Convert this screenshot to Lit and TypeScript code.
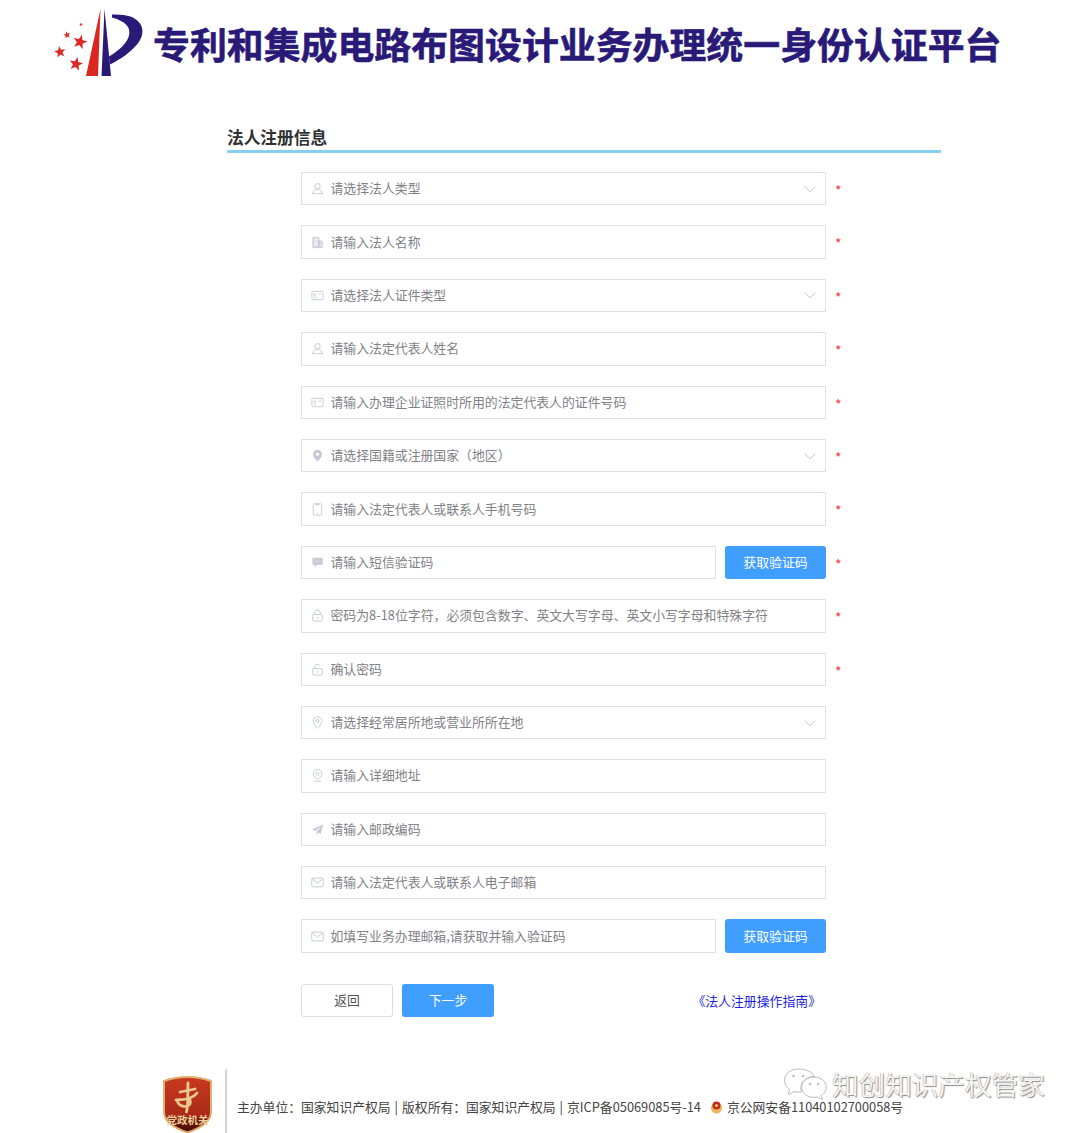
import { LitElement, html, css, svg } from "lit";
import { customElement } from "lit/decorators.js";

const G = "#c5c9d3";
const icons: Record<string, any> = {
  user: svg`<circle cx="7" cy="4.6" r="3" fill="none" stroke="${G}"/><path d="M1.6 12.5c.4-3 2.6-4.4 5.4-4.4s5 1.4 5.4 4.4z" fill="none" stroke="${G}"/>`,
  org: svg`<path d="M2 1.5h6.5v11H2zM8.500 5.500h3.500v7H8.500z" fill="${G}" fill-opacity=".55" stroke="${G}"/><path d="M3.800 4h3M3.800 6.500h3M3.800 9h3" stroke="#fff"/>`,
  card: svg`<rect x="1" y="2.500" width="12" height="9" rx="1" fill="none" stroke="${G}"/><path d="M3 8.800h3M8 5.500h3" stroke="${G}"/><rect x="3" y="5" width="2" height="2" fill="${G}"/>`,
  pinSolid: svg`<path d="M7 .8a4.800 4.800 0 0 0-4.800 4.800C2.200 9 7 13.400 7 13.400s4.800-4.400 4.800-7.800A4.800 4.800 0 0 0 7 .8z" fill="${G}"/><circle cx="7" cy="5.600" r="1.800" fill="#fff"/>`,
  phone: svg`<rect x="2.500" y=".8" width="9" height="12.400" rx="1.400" fill="none" stroke="${G}"/><path d="M5 1h4v1.400H5z" fill="${G}"/><path d="M6.200 11h1.600" stroke="${G}"/>`,
  chat: svg`<path d="M1.500 2h11v7.500H6.500L4 12V9.500H1.500z" fill="${G}"/><path d="M4 5.700h1M6.500 5.700h1M9 5.700h1" stroke="#fff"/>`,
  lock: svg`<rect x="1.800" y="6" width="10.400" height="7" rx="1" fill="none" stroke="${G}"/><path d="M4 6V4a3 3 0 0 1 6 0v2" fill="none" stroke="${G}"/><path d="M7 8.500v2" stroke="${G}"/>`,
  unlock: svg`<rect x="1.800" y="6" width="10.400" height="7" rx="1" fill="none" stroke="${G}"/><path d="M4 6V4a3 3 0 0 1 5.800-.8" fill="none" stroke="${G}"/><path d="M7 8.500v2" stroke="${G}"/>`,
  pin: svg`<path d="M7 .8a4.600 4.600 0 0 0-4.600 4.600C2.400 8.800 7 13.400 7 13.400s4.600-4.600 4.600-8A4.600 4.600 0 0 0 7 .8z" fill="none" stroke="${G}"/><circle cx="7" cy="5.400" r="1.700" fill="none" stroke="${G}"/>`,
  pinBase: svg`<path d="M7 .6a4.600 4.600 0 0 0-4.600 4.600C2.400 8 7 11.600 7 11.600s4.600-3.600 4.600-6.400A4.600 4.600 0 0 0 7 .6z" fill="none" stroke="${G}"/><circle cx="7" cy="5.200" r="1.700" fill="none" stroke="${G}"/><path d="M3.500 13.200h7" stroke="${G}"/>`,
  send: svg`<path d="M13 1.500 1 7l3.400 1.600L11 4 6 9.400V13l2.200-2.600 2.400 1.100z" fill="${G}"/>`,
  mail: svg`<rect x=".8" y="2.300" width="12.400" height="9.400" rx="1.200" fill="none" stroke="${G}"/><path d="M1.200 3.200 7 7.600l5.800-4.400" fill="none" stroke="${G}"/>`,
};

type Row = { icon: string; text: string; select?: boolean; req?: boolean; code?: boolean };
const rows: Row[] = [
  { icon: "user", text: "请选择法人类型", select: true, req: true },
  { icon: "org", text: "请输入法人名称", req: true },
  { icon: "card", text: "请选择法人证件类型", select: true, req: true },
  { icon: "user", text: "请输入法定代表人姓名", req: true },
  { icon: "card", text: "请输入办理企业证照时所用的法定代表人的证件号码", req: true },
  { icon: "pinSolid", text: "请选择国籍或注册国家（地区）", select: true, req: true },
  { icon: "phone", text: "请输入法定代表人或联系人手机号码", req: true },
  { icon: "chat", text: "请输入短信验证码", code: true, req: true },
  { icon: "lock", text: "密码为8-18位字符，必须包含数字、英文大写字母、英文小写字母和特殊字符", req: true },
  { icon: "unlock", text: "确认密码", req: true },
  { icon: "pin", text: "请选择经常居所地或营业所所在地", select: true },
  { icon: "pinBase", text: "请输入详细地址" },
  { icon: "send", text: "请输入邮政编码" },
  { icon: "mail", text: "请输入法定代表人或联系人电子邮箱" },
  { icon: "mail", text: "如填写业务办理邮箱,请获取并输入验证码", code: true },
];

const star = (cx: number, cy: number, r: number, rot = 0) => {
  const pts: string[] = [];
  for (let i = 0; i < 10; i++) {
    const a = ((-90 + rot + i * 36) * Math.PI) / 180;
    const d = i % 2 ? r * 0.42 : r;
    pts.push(`${(cx + d * Math.cos(a)).toFixed(2)},${(cy + d * Math.sin(a)).toFixed(2)}`);
  }
  return svg`<polygon points="${pts.join(" ")}" fill="#dc2b26"/>`;
};

@customElement("app-root")
export class AppRoot extends LitElement {
  static styles = css`
    :host {
      display: block;
      position: relative;
      width: 1080px;
      height: 1133px;
      overflow: hidden;
      background: #fff;
      font-family: "Noto Sans CJK SC", "Liberation Sans", sans-serif;
      color: #333;
    }
    .header {
      display: flex;
      align-items: center;
      height: 87px;
      padding-left: 50px;
    }
    .logo { width: 100px; height: 80px; flex: none; margin-right: 3px; }
    .brand {
      font-size: 36.9px;
      font-weight: 700;
      color: #2a1a78;
      white-space: nowrap;
      -webkit-text-stroke: 0.6px #2a1a78;
      line-height: 1;
    }
    .section {
      margin: 37px 0 0 227px;
      width: 714px;
      height: 29px;
      box-sizing: border-box;
      border-bottom: 3px solid #87cfee;
      font-size: 16.7px;
      font-weight: 700;
      line-height: 27px;
      color: #303133;
    }
    .form {
      margin: 19px 0 0 301px;
      display: grid;
      gap: 20px;
      grid-auto-rows: 33.4px;
      width: 560px;
    }
    .row { display: flex; align-items: stretch; }
    .field {
      box-sizing: border-box;
      flex: none;
      width: 525px;
      display: flex;
      align-items: center;
      padding-left: 9px;
      border: 1px solid #dfe1ea;
      background: #fff;
      font-size: 12.86px;
      color: #808287;
      white-space: nowrap;
    }
    .field.short { width: 415px; }
    .ico { width: 13px; height: 13px; flex: none; margin-right: 6.500px; }
    .label { flex: 1; padding-bottom: 2px; }
    .chev { width: 12px; height: 12px; flex: none; margin-right: 9px; }
    .btn {
      box-sizing: border-box;
      border-radius: 3px;
      display: flex;
      align-items: center;
      justify-content: center;
      font-size: 12.86px;
      padding-bottom: 2px;
    }
    .primary { background: #409eff; color: #fff; }
    .code { width: 101px; margin-left: 9px; flex: none; }
    .star {
      flex: none;
      width: 10px;
      margin-left: 9px;
      color: #f03a3a;
      font-size: 14px;
      line-height: 36px;
    }
    .actions {
      margin: 31.500px 0 0 301px;
      width: 525px;
      display: flex;
      align-items: center;
      height: 33px;
      gap: 9px;
    }
    .actions .btn { width: 92px; height: 33px; }
    .ghost { border: 1px solid #dcdfe6; color: #555; background: #fff; }
    .guide {
      margin-left: auto;
      margin-right: 5px;
      font-size: 12.86px;
      color: #1f1fe0;
      white-space: nowrap;
      padding-bottom: 1px;
    }
    .footer {
      margin: 52px 0 0 163px;
      display: flex;
      align-items: stretch;
      height: 64px;
      color: #444;
      white-space: nowrap;
    }
    .shield { width: 49px; height: 57px; flex: none; margin-top: 7px; }
    .divider { width: 2px; background: #d4d4d4; margin: 0 10px 0 13px; flex: none; }
    .info { display: flex; align-items: center; height: 75px; font-size: 12.8px; }
    .bar { margin: 0 4px; }
    .badge { width: 13px; height: 14px; margin: 0 4px 0 9px; flex: none; }
    .watermark {
      position: absolute;
      left: 783px;
      top: 1066px;
      display: flex;
      align-items: center;
      gap: 4px;
      pointer-events: none;
    }
    .wechat { width: 45px; height: 36px; flex: none; }
    .wm {
      font-size: 26.600px;
      line-height: 36px;
      color: #f4f4f4;
      white-space: nowrap;
      text-shadow: 1px 1px 1px #8c8c8c, -0.500px -0.500px 0 #b0b0b0;
    }
  `;

  private renderRow(r: Row) {
    return html`<div class="row">
      <div class="field ${r.code ? "short" : ""}">
        <svg class="ico" viewBox="0 0 14 14">${icons[r.icon]}</svg>
        <span class="label">${r.text}</span>
        ${r.select
          ? html`<svg class="chev" viewBox="0 0 12 12"><path d="M.8 3.600 6 8.800l5.200-5.200" fill="none" stroke="#c0c4cc"/></svg>`
          : ""}
      </div>
      ${r.code ? html`<div class="btn primary code">获取验证码</div>` : ""}
      ${r.req ? html`<span class="star">*</span>` : ""}
    </div>`;
  }

  render() {
    return html`
      <div class="header">
        <svg class="logo" viewBox="0 0 100 80">
          ${star(31, 20.5, 2)} ${star(17, 31, 3.8, -15)} ${star(30, 38, 7.4, 15)}
          ${star(10, 48, 6, -10)} ${star(26, 60, 7.2, 12)}
          <path d="M50.500 5 48 72H36z" fill="#dc2620"/>
          <path d="M54.500 5 61 72 51.500 72z" fill="#2a1a78"/>
          <path d="M62 10.500c14-.5 23 2 28 9 4 6 3 14-3 21-6 7-15 14-27 20l-1-8c10-6 18-13 20-21 2-8-3-14-17-18z" fill="#2a1a78"/>
        </svg>
        <div class="brand">专利和集成电路布图设计业务办理统一身份认证平台</div>
      </div>
      <div class="section">法人注册信息</div>
      <div class="form">${rows.map((r) => this.renderRow(r))}</div>
      <div class="actions">
        <div class="btn ghost">返回</div>
        <div class="btn primary">下一步</div>
        <span class="guide">《法人注册操作指南》</span>
      </div>
      <div class="footer">
        <svg class="shield" viewBox="0 0 49 57">
          <defs>
            <linearGradient id="sg" x1="0" y1="0" x2="0" y2="1">
              <stop offset="0" stop-color="#c8391f" />
              <stop offset=".7" stop-color="#a92a18" />
              <stop offset=".78" stop-color="#6a1509" />
              <stop offset="1" stop-color="#4a0c05" />
            </linearGradient>
          </defs>
          <path d="M24.500 1C16 1 8 2.500 1 5v31c0 10 10 16 23.500 20.500C38 52 48 46 48 36V5c-7-2.500-15-4-23.500-4z" fill="url(#sg)" stroke="#e0b070" stroke-width="2" />
          <path d="M25 7c-.5 9 .5 21-1.500 29M17 16l15-3M13 24c4 0 16 0 21-7M14 24c1 5 5 7 10 6 3-.6 4-3 3-6" fill="none" stroke="#ecc98e" stroke-width="2.800" stroke-linecap="round" />
          <text x="24.500" y="47.500" text-anchor="middle" font-size="10.500" font-weight="700" fill="#f0cf9a">党政机关</text>
        </svg>
        <div class="divider"></div>
        <div class="info">
          <span>主办单位：国家知识产权局<span class="bar">|</span>版权所有：国家知识产权局<span class="bar">|</span>京ICP备05069085号-14</span>
          <svg class="badge" viewBox="0 0 13 14">
            <circle cx="6.500" cy="8" r="5.500" fill="#eeb45a" />
            <circle cx="6.500" cy="5.500" r="4" fill="#c5281c" />
            <circle cx="6.500" cy="5.500" r="1.500" fill="#f3d27a" />
          </svg>
          <span>京公网安备11040102700058号</span>
        </div>
      </div>
      <div class="watermark">
        <svg class="wechat" viewBox="0 0 45 36">
          <path d="M15 3C7.500 3 1.500 8 1.500 14.500c0 3.700 2 7 5 9l-1 5 5.500-3c1.500.4 3 .6 4.500.6 1 0 2-.1 3-.3-.5-1.300-.7-2.500-.7-3.800 0-6.500 6-11.500 13.500-11.500C29 5.500 22.500 3 15 3z" fill="#fff" stroke="#bcbcbc" />
          <path d="M31 11c-6.800 0-12.300 4.500-12.300 10.200S24.200 31.400 31 31.400c1.300 0 2.600-.2 3.800-.5l4.500 2.800-1-4.300c3-1.900 5-4.900 5-8.200C43.300 15.500 37.800 11 31 11z" fill="#fff" stroke="#bcbcbc" />
          <circle cx="10.500" cy="10" r="1.300" fill="#bcbcbc" /><circle cx="20" cy="10" r="1.300" fill="#bcbcbc" />
          <circle cx="27" cy="18" r="1.200" fill="#bcbcbc" /><circle cx="35" cy="18" r="1.200" fill="#bcbcbc" />
        </svg>
        <span class="wm">知创知识产权管家</span>
      </div>
    `;
  }
}
